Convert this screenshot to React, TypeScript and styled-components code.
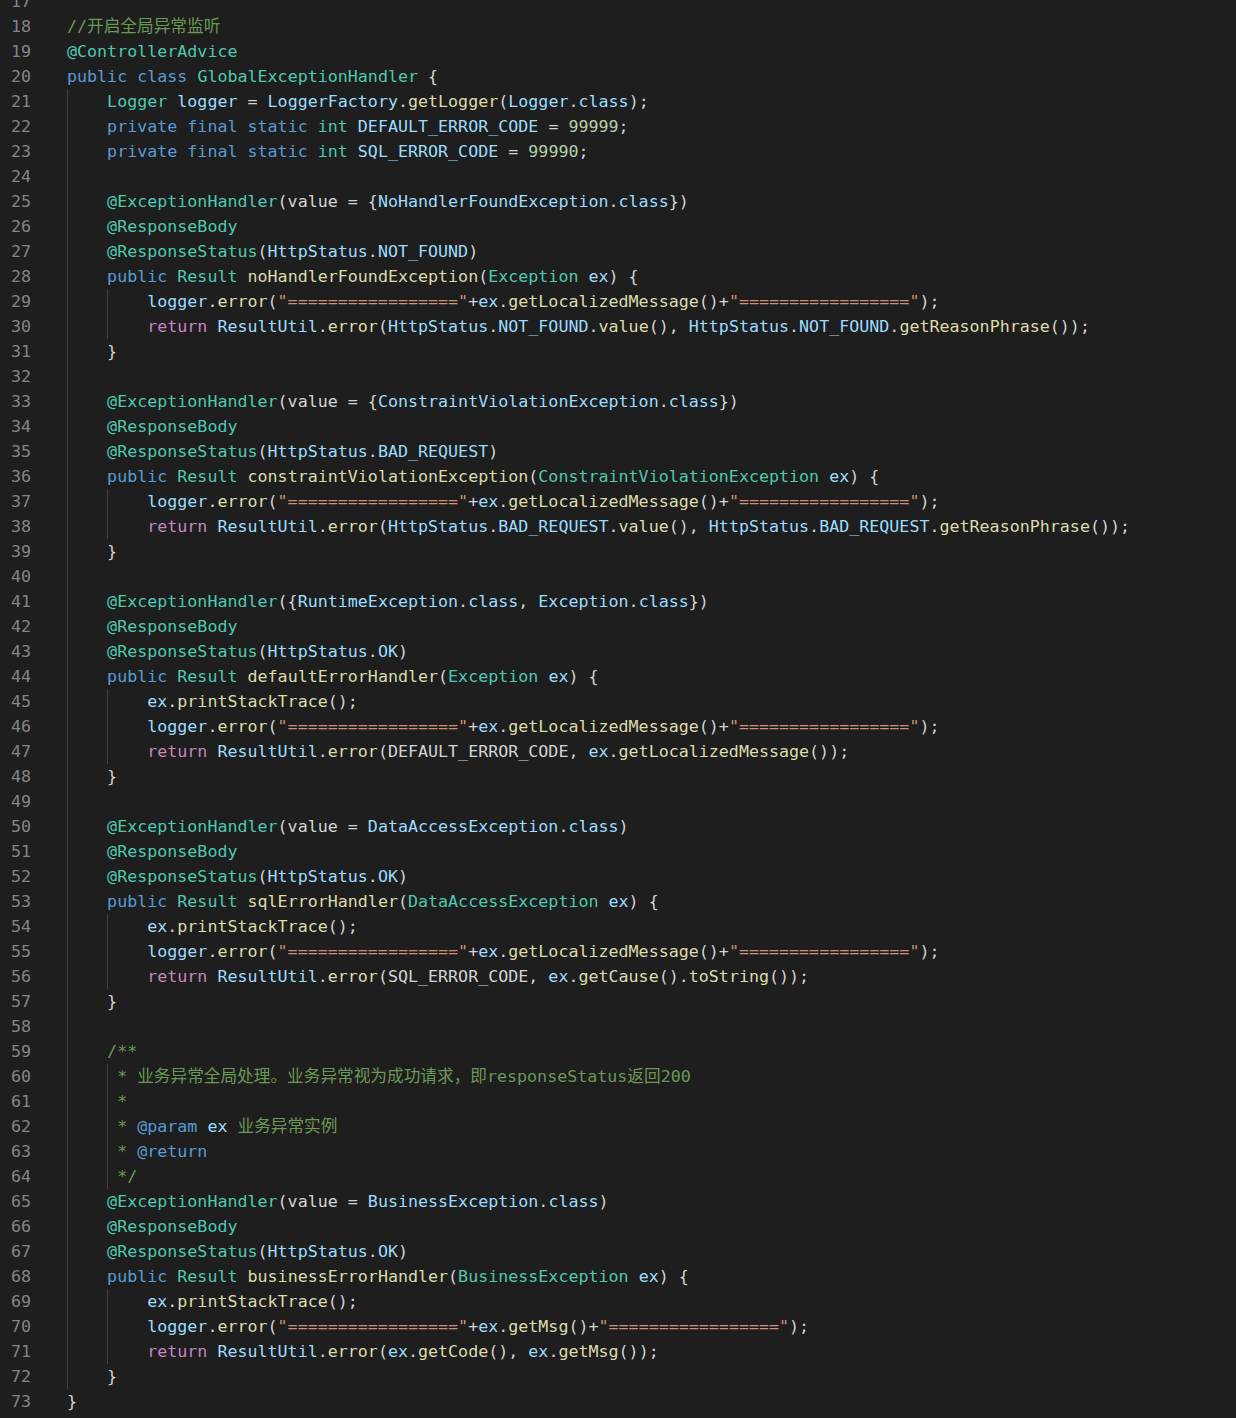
import React from "react";
import styled, { createGlobalStyle } from "styled-components";

const Global = createGlobalStyle`
  html, body {
    margin: 0;
    padding: 0;
    background: #1e1e1e;
  }
  body {
    min-height: 100vh;
    overflow: hidden;
  }
`;

const palette: Record<string, string> = {
  p: "#d4d4d4",
  k: "#569cd6",
  t: "#4ec9b0",
  v: "#9cdcfe",
  f: "#dcdcaa",
  s: "#ce9178",
  c: "#6a9955",
  r: "#c586c0",
  n: "#b5cea8",
};

const Editor = styled.div`
  display: flex;
  flex-direction: column;
  margin-top: -11px;
  font-family: "DejaVu Sans Mono", "Noto Sans CJK SC", monospace;
  font-size: 16.66px;
  line-height: 25px;
  color: #d4d4d4;
  background: #1e1e1e;
`;

const Line = styled.div`
  display: flex;
  align-items: flex-start;
  height: 25px;
`;

const LineNo = styled.span`
  flex: none;
  width: 31px;
  text-align: right;
  color: #858585;
`;

const Code = styled.span`
  flex: 1;
  margin-left: 36px;
  white-space: pre;
`;

const Indent = styled.span<{ $w: number }>`
  display: inline-block;
  vertical-align: top;
  height: 25px;
  width: ${(p) => p.$w}ch;
  box-shadow: inset 1px 0 0 0 #404040;
`;

const Tok = styled.span<{ $kind: string }>`
  color: ${(p) => palette[p.$kind] || palette.p};
`;

type Spec = [number, number, number, string];

// [line number, leading spaces, guide count, marked-up code]
const lines: Spec[] = [
  [17, 0, 0, ""],
  [18, 0, 0, "[c|//开启全局异常监听]"],
  [19, 0, 0, "[t|@ControllerAdvice]"],
  [20, 0, 0, "[k|public] [k|class] [t|GlobalExceptionHandler] {"],
  [21, 4, 1, "[t|Logger] [v|logger] = [v|LoggerFactory].[f|getLogger]([v|Logger].[v|class]);"],
  [22, 4, 1, "[k|private] [k|final] [k|static] [t|int] [v|DEFAULT_ERROR_CODE] = [n|99999];"],
  [23, 4, 1, "[k|private] [k|final] [k|static] [t|int] [v|SQL_ERROR_CODE] = [n|99990];"],
  [24, 4, 1, ""],
  [25, 4, 1, "[t|@ExceptionHandler](value = {[v|NoHandlerFoundException].[v|class]})"],
  [26, 4, 1, "[t|@ResponseBody]"],
  [27, 4, 1, "[t|@ResponseStatus]([v|HttpStatus].[v|NOT_FOUND])"],
  [28, 4, 1, "[k|public] [t|Result] [f|noHandlerFoundException]([t|Exception] [v|ex]) {"],
  [29, 8, 2, '[v|logger].[f|error]([s|"================="]+[v|ex].[f|getLocalizedMessage]()+[s|"================="]);'],
  [30, 8, 2, "[r|return] [v|ResultUtil].[f|error]([v|HttpStatus].[v|NOT_FOUND].[f|value](), [v|HttpStatus].[v|NOT_FOUND].[f|getReasonPhrase]());"],
  [31, 4, 1, "}"],
  [32, 4, 1, ""],
  [33, 4, 1, "[t|@ExceptionHandler](value = {[v|ConstraintViolationException].[v|class]})"],
  [34, 4, 1, "[t|@ResponseBody]"],
  [35, 4, 1, "[t|@ResponseStatus]([v|HttpStatus].[v|BAD_REQUEST])"],
  [36, 4, 1, "[k|public] [t|Result] [f|constraintViolationException]([t|ConstraintViolationException] [v|ex]) {"],
  [37, 8, 2, '[v|logger].[f|error]([s|"================="]+[v|ex].[f|getLocalizedMessage]()+[s|"================="]);'],
  [38, 8, 2, "[r|return] [v|ResultUtil].[f|error]([v|HttpStatus].[v|BAD_REQUEST].[f|value](), [v|HttpStatus].[v|BAD_REQUEST].[f|getReasonPhrase]());"],
  [39, 4, 1, "}"],
  [40, 4, 1, ""],
  [41, 4, 1, "[t|@ExceptionHandler]({[v|RuntimeException].[v|class], [v|Exception].[v|class]})"],
  [42, 4, 1, "[t|@ResponseBody]"],
  [43, 4, 1, "[t|@ResponseStatus]([v|HttpStatus].[v|OK])"],
  [44, 4, 1, "[k|public] [t|Result] [f|defaultErrorHandler]([t|Exception] [v|ex]) {"],
  [45, 8, 2, "[v|ex].[f|printStackTrace]();"],
  [46, 8, 2, '[v|logger].[f|error]([s|"================="]+[v|ex].[f|getLocalizedMessage]()+[s|"================="]);'],
  [47, 8, 2, "[r|return] [v|ResultUtil].[f|error](DEFAULT_ERROR_CODE, [v|ex].[f|getLocalizedMessage]());"],
  [48, 4, 1, "}"],
  [49, 4, 1, ""],
  [50, 4, 1, "[t|@ExceptionHandler](value = [v|DataAccessException].[v|class])"],
  [51, 4, 1, "[t|@ResponseBody]"],
  [52, 4, 1, "[t|@ResponseStatus]([v|HttpStatus].[v|OK])"],
  [53, 4, 1, "[k|public] [t|Result] [f|sqlErrorHandler]([t|DataAccessException] [v|ex]) {"],
  [54, 8, 2, "[v|ex].[f|printStackTrace]();"],
  [55, 8, 2, '[v|logger].[f|error]([s|"================="]+[v|ex].[f|getLocalizedMessage]()+[s|"================="]);'],
  [56, 8, 2, "[r|return] [v|ResultUtil].[f|error](SQL_ERROR_CODE, [v|ex].[f|getCause]().[f|toString]());"],
  [57, 4, 1, "}"],
  [58, 4, 1, ""],
  [59, 4, 1, "[c|/**]"],
  [60, 5, 2, "[c|* 业务异常全局处理。业务异常视为成功请求，即responseStatus返回200]"],
  [61, 5, 2, "[c|*]"],
  [62, 5, 2, "[c|* ][k|@param] [v|ex][c| 业务异常实例]"],
  [63, 5, 2, "[c|* ][k|@return]"],
  [64, 5, 2, "[c|*/]"],
  [65, 4, 1, "[t|@ExceptionHandler](value = [v|BusinessException].[v|class])"],
  [66, 4, 1, "[t|@ResponseBody]"],
  [67, 4, 1, "[t|@ResponseStatus]([v|HttpStatus].[v|OK])"],
  [68, 4, 1, "[k|public] [t|Result] [f|businessErrorHandler]([t|BusinessException] [v|ex]) {"],
  [69, 8, 2, "[v|ex].[f|printStackTrace]();"],
  [70, 8, 2, '[v|logger].[f|error]([s|"================="]+[v|ex].[f|getMsg]()+[s|"================="]);'],
  [71, 8, 2, "[r|return] [v|ResultUtil].[f|error]([v|ex].[f|getCode](), [v|ex].[f|getMsg]());"],
  [72, 4, 1, "}"],
  [73, 0, 0, "}"],
];

function tokenize(src: string): [string, string][] {
  const out: [string, string][] = [];
  const re = /\[(\w)\|([^\]]*)\]/g;
  let last = 0;
  let m: RegExpExecArray | null;
  while ((m = re.exec(src))) {
    if (m.index > last) out.push(["p", src.slice(last, m.index)]);
    out.push([m[1], m[2]]);
    last = re.lastIndex;
  }
  if (last < src.length) out.push(["p", src.slice(last)]);
  return out;
}

function guideWidths(lead: number, guides: number): number[] {
  const widths: number[] = [];
  for (let i = 0; i < guides; i++) {
    const rest = lead - i * 4;
    widths.push(i < guides - 1 ? 4 : Math.max(1, Math.min(4, rest)));
  }
  return widths;
}

export default function App() {
  return (
    <>
      <Global />
      <Editor>
        {lines.map(([n, lead, guides, src]) => (
          <Line key={n}>
            <LineNo>{n}</LineNo>
            <Code>
              {guideWidths(lead, guides).map((w, i) => (
                <Indent key={i} $w={w} />
              ))}
              {tokenize(src).map(([k, text], i) => (
                <Tok key={i} $kind={k}>
                  {text}
                </Tok>
              ))}
            </Code>
          </Line>
        ))}
      </Editor>
    </>
  );
}
